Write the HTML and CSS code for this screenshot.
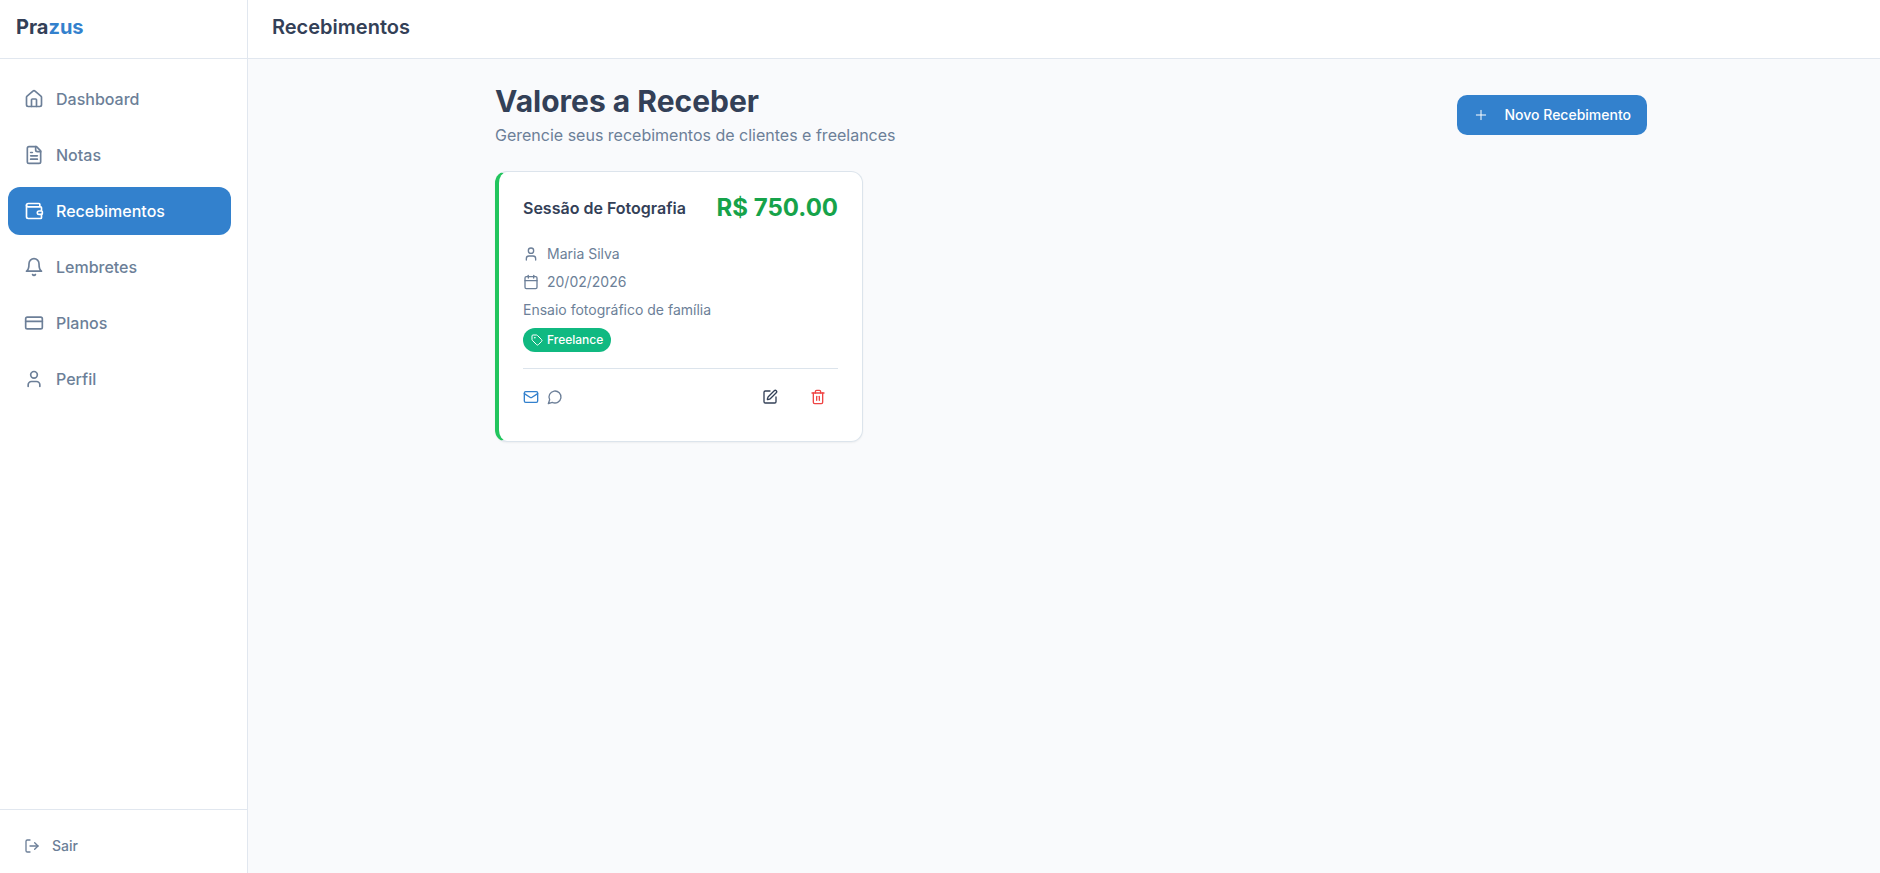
FILE: index.html
```html
<!DOCTYPE html>
<html lang="pt-BR">
<head>
<meta charset="utf-8">
<meta name="viewport" content="width=device-width, initial-scale=1">
<title>Prazus - Recebimentos</title>
<link rel="stylesheet" href="styles.css">
</head>
<body>
<div class="app">
  <aside class="sidebar">
    <div class="brand"><span>Pra<span class="brand-accent">zus</span></span></div>
    <nav class="nav">
      <a class="nav-link" href="#"><svg class="icon icon-lg" viewBox="0 0 24 24"><path d="M15 21v-8a1 1 0 0 0-1-1h-4a1 1 0 0 0-1 1v8"/><path d="M3 10a2 2 0 0 1 .709-1.528l7-5.999a2 2 0 0 1 2.582 0l7 5.999A2 2 0 0 1 21 10v9a2 2 0 0 1-2 2H5a2 2 0 0 1-2-2z"/></svg>Dashboard</a>
      <a class="nav-link" href="#"><svg class="icon icon-lg" viewBox="0 0 24 24"><path d="M15 2H6a2 2 0 0 0-2 2v16a2 2 0 0 0 2 2h12a2 2 0 0 0 2-2V7Z"/><path d="M14 2v4a2 2 0 0 0 2 2h4"/><path d="M10 9H8"/><path d="M16 13H8"/><path d="M16 17H8"/></svg>Notas</a>
      <a class="nav-link nav-active" href="#" aria-current="page"><svg class="icon icon-lg" viewBox="0 0 24 24"><path d="M19 7V4a1 1 0 0 0-1-1H5a2 2 0 0 0 0 4h15a1 1 0 0 1 1 1v4h-3a2 2 0 0 0 0 4h3a1 1 0 0 0 1-1v-2a1 1 0 0 0-1-1"/><path d="M3 5v14a2 2 0 0 0 2 2h15a1 1 0 0 0 1-1v-4"/></svg>Recebimentos</a>
      <a class="nav-link" href="#"><svg class="icon icon-lg" viewBox="0 0 24 24"><path d="M6 8a6 6 0 0 1 12 0c0 7 3 9 3 9H3s3-2 3-9"/><path d="M10.3 21a1.94 1.94 0 0 0 3.4 0"/></svg>Lembretes</a>
      <a class="nav-link" href="#"><svg class="icon icon-lg" viewBox="0 0 24 24"><rect x="2" y="5" width="20" height="14" rx="2"/><path d="M2 10h20"/></svg>Planos</a>
      <a class="nav-link" href="#"><svg class="icon icon-lg" viewBox="0 0 24 24"><path d="M19 21v-2a4 4 0 0 0-4-4H9a4 4 0 0 0-4 4v2"/><circle cx="12" cy="7" r="4"/></svg>Perfil</a>
    </nav>
    <div class="sidebar-footer">
      <button class="logout" type="button"><svg class="icon" viewBox="0 0 24 24"><path d="M9 21H5a2 2 0 0 1-2-2V5a2 2 0 0 1 2-2h4"/><path d="m16 17 5-5-5-5"/><path d="M21 12H9"/></svg>Sair</button>
    </div>
  </aside>
  <div class="content">
    <header class="topbar"><h1 class="topbar-title">Recebimentos</h1></header>
    <main class="main">
      <div class="container">
        <div class="page-head">
          <div>
            <h2 class="page-title">Valores a Receber</h2>
            <p class="page-subtitle">Gerencie seus recebimentos de clientes e freelances</p>
          </div>
          <button class="primary" type="button"><svg class="icon icon-thin" viewBox="0 0 24 24"><path d="M5 12h14"/><path d="M12 5v14"/></svg>Novo Recebimento</button>
        </div>
        <div class="cards">
          <article class="card">
            <div class="card-head">
              <h3 class="card-title">Sessão de Fotografia</h3>
              <span class="amount">R$ 750.00</span>
            </div>
            <div class="details">
              <p class="detail"><svg class="icon" viewBox="0 0 24 24"><path d="M19 21v-2a4 4 0 0 0-4-4H9a4 4 0 0 0-4 4v2"/><circle cx="12" cy="7" r="4"/></svg>Maria Silva</p>
              <p class="detail"><svg class="icon" viewBox="0 0 24 24"><path d="M8 2v4"/><path d="M16 2v4"/><rect x="3" y="4" width="18" height="18" rx="2"/><path d="M3 10h18"/></svg>20/02/2026</p>
              <p class="detail">Ensaio fotográfico de família</p>
              <span class="badge"><svg class="icon icon-sm" viewBox="0 0 24 24"><path d="M12.586 2.586A2 2 0 0 0 11.172 2H4a2 2 0 0 0-2 2v7.172a2 2 0 0 0 .586 1.414l8.704 8.704a2.426 2.426 0 0 0 3.42 0l6.58-6.58a2.426 2.426 0 0 0 0-3.42z"/><circle cx="7.5" cy="7.5" r=".5"/></svg>Freelance</span>
            </div>
            <div class="card-foot">
              <div class="channels">
                <svg class="icon mail" viewBox="0 0 24 24" role="img" aria-label="E-mail"><rect x="2" y="4" width="20" height="16" rx="2"/><path d="m22 7-8.97 5.7a1.94 1.94 0 0 1-2.06 0L2 7"/></svg>
                <svg class="icon" viewBox="0 0 24 24" role="img" aria-label="Mensagem"><path d="M7.9 20A9 9 0 1 0 4 16.1L2 22Z"/></svg>
              </div>
              <div class="actions">
                <button class="icon-button" type="button" aria-label="Editar"><svg class="icon" viewBox="0 0 24 24"><path d="M12 3H5a2 2 0 0 0-2 2v14a2 2 0 0 0 2 2h14a2 2 0 0 0 2-2v-7"/><path d="M18.375 2.625a1 1 0 0 1 3 3l-9.013 9.014a2 2 0 0 1-.853.505l-2.873.84a.5.5 0 0 1-.62-.62l.84-2.873a2 2 0 0 1 .506-.852z"/></svg></button>
                <button class="icon-button danger" type="button" aria-label="Excluir"><svg class="icon" viewBox="0 0 24 24"><path d="M3 6h18"/><path d="M19 6v14c0 1-1 2-2 2H7c-1 0-2-1-2-2V6"/><path d="M8 6V4c0-1 1-2 2-2h4c1 0 2 1 2 2v2"/><path d="M10 11v6"/><path d="M14 11v6"/></svg></button>
              </div>
            </div>
          </article>
        </div>
      </div>
    </main>
  </div>
</div>
</body>
</html>
```
FILE: styles.css
```css
* { box-sizing: border-box; }
body {
  margin: 0;
  background: #f9fafc;
  color: #334057;
  font-family: Inter, "Liberation Sans", sans-serif;
  font-size: 14px;
  line-height: 20px;
}
h1, h2, h3, p { margin: 0; }
button {
  border: 0;
  background: none;
  font: inherit;
  color: inherit;
  cursor: pointer;
}
.app { display: flex; min-height: 100vh; }

.icon {
  width: 16px;
  height: 16px;
  flex: none;
  fill: none;
  stroke: currentColor;
  stroke-width: 2;
  stroke-linecap: round;
  stroke-linejoin: round;
}
.icon-lg { width: 20px; height: 20px; }
.icon-sm { width: 12px; height: 12px; }
.icon-thin { stroke-width: 1.5; }

.sidebar {
  display: flex;
  flex-direction: column;
  flex: none;
  width: 248px;
  background: #fff;
  border-right: 1px solid #e1e7ef;
}
.brand, .topbar {
  border-bottom: 1px solid #e1e7ef;
  padding-top: 13px;
  padding-bottom: 17px;
  font-size: 20px;
  line-height: 28px;
}
.brand { padding-left: 16px; font-weight: 700; }
.brand-accent { color: #3381cd; }
.nav {
  display: flex;
  flex-direction: column;
  flex: 1;
  gap: 8px;
  padding: 16px 16px 16px 8px;
}
.nav-link {
  display: flex;
  align-items: center;
  gap: 12px;
  padding: 12px 16px;
  border-radius: 12px;
  color: #6c7f98;
  font-size: 16px;
  font-weight: 500;
  line-height: 24px;
  text-decoration: none;
}
.nav-active { background: #3381cd; color: #fff; }
.sidebar-footer {
  border-top: 1px solid #e1e7ef;
  padding: 16px 16px 7px 8px;
}
.logout {
  display: flex;
  align-items: center;
  gap: 12px;
  width: 100%;
  height: 40px;
  padding: 0 16px;
  color: #6c7f98;
  font-weight: 500;
}

.content { flex: 1; min-width: 0; }
.topbar { padding-left: 24px; background: #fff; }
.topbar-title { font-size: 20px; font-weight: 600; line-height: 28px; }
.main { padding: 24px 10px 24px 24px; }
.container { max-width: 1152px; margin: 0 auto; }
.page-head {
  display: flex;
  align-items: center;
  justify-content: space-between;
  margin-bottom: 24px;
}
.page-title { font-size: 30px; font-weight: 700; line-height: 36px; }
.page-subtitle {
  margin-top: 4px;
  color: #6c7f98;
  font-size: 16px;
  line-height: 24px;
}
.primary {
  display: flex;
  align-items: center;
  gap: 16px;
  height: 40px;
  padding: 0 16px;
  border-radius: 10px;
  background: #3381cd;
  color: #fff;
  font-weight: 500;
}

.cards { display: grid; grid-template-columns: repeat(3, 1fr); gap: 24px; }
.card {
  padding: 20px 24px 24px;
  border: 1px solid #dce4ec;
  border-left: 4px solid #22c55e;
  border-radius: 12px;
  background: #fff;
  box-shadow: 0 1px 2px rgb(0 0 0 / 5%);
}
.card-head {
  display: flex;
  align-items: center;
  justify-content: space-between;
  margin-bottom: 20px;
}
.card-title { font-size: 16px; font-weight: 600; line-height: 24px; }
.amount { color: #16a34a; font-size: 24px; font-weight: 700; line-height: 32px; }
.details {
  display: flex;
  flex-direction: column;
  align-items: flex-start;
  gap: 8px;
  color: #6c7f98;
}
.detail { display: flex; align-items: center; gap: 8px; }
.badge {
  display: flex;
  align-items: center;
  gap: 4px;
  height: 24px;
  padding: 0 8px;
  border-radius: 12px;
  background: #10b981;
  color: #fff;
  font-size: 12px;
  font-weight: 500;
}
.card-foot {
  display: flex;
  align-items: center;
  justify-content: space-between;
  margin-top: 16px;
  padding-top: 8px;
  border-top: 1px solid #dce4ec;
  color: #6c7f98;
}
.channels, .actions { display: flex; gap: 8px; }
.mail { color: #3381cd; }
.icon-button {
  display: flex;
  align-items: center;
  justify-content: center;
  width: 40px;
  height: 40px;
  padding: 0;
  color: #334057;
}
.danger { color: #ef4444; }
```
